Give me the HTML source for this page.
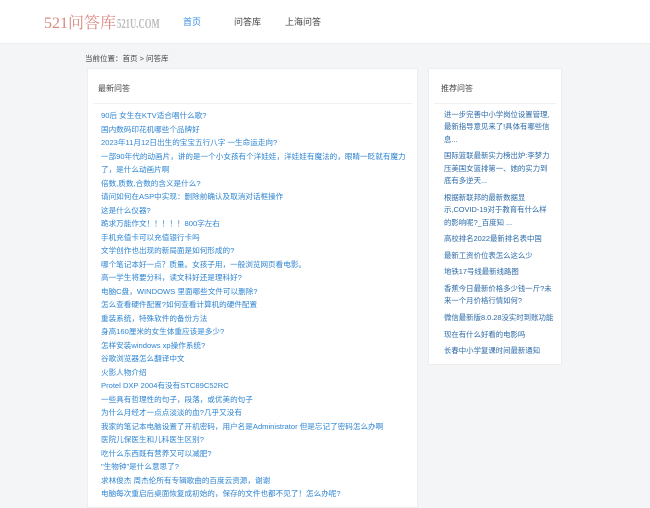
<!DOCTYPE html>
<html><head><meta charset="utf-8"><style>
*{margin:0;padding:0;box-sizing:border-box}
body{width:650px;height:500px;overflow:hidden;background:#f4f5f7;font-family:"Liberation Sans","Noto Sans CJK SC",sans-serif;font-size:8px;color:#333}
.hd{position:absolute;left:0;top:0;width:650px;height:44px;background:#fff;border-bottom:1px solid #eee}
.logo{position:absolute;left:44px;top:10px;font-family:"Liberation Serif","Noto Serif CJK SC",serif;font-size:16px;color:#d98a80;white-space:nowrap}
.logo span{display:inline-block;color:#bbb;font-size:14px;font-weight:bold;transform:scaleX(0.62);transform-origin:left center;margin-left:1px}
.nav{position:absolute;top:15px;font-size:9px;color:#444}
.bc{position:absolute;left:85px;top:53px;font-size:7.5px;color:#444}
.card{position:absolute;background:#fff;border:1px solid #eee}
.ct{position:absolute;left:10px;top:14px;font-size:8px;color:#444}
.ln{position:absolute;left:5px;right:5px;top:34px;border-top:1px solid #f0f0f0}
.l{position:absolute;left:13px;top:40px;width:310px}
.l div{color:#2d84d2;line-height:13.5px;font-size:7.6px;white-space:nowrap}
.l div.w{white-space:normal}
.r{position:absolute;left:15px;top:40px;width:110px}
.r div{color:#2b6aa8;line-height:12.4px;font-size:7.4px;margin-bottom:4.2px}
</style></head><body>
<div class="hd">
<div class="logo">521问答库<span>521U.COM</span></div>
<div class="nav" style="left:183px;color:#3a8ee6">首页</div>
<div class="nav" style="left:234px">问答库</div>
<div class="nav" style="left:285px">上海问答</div>
</div>
<div class="bc">当前位置：首页 &gt; 问答库</div>
<div class="card" style="left:87px;top:68px;width:331px;height:440px">
<div class="ct">最新问答</div><div class="ln"></div>
<div class="l">
<div>90后 女生在KTV适合唱什么歌?</div>
<div>国内数码印花机哪些个品牌好</div>
<div>2023年11月12日出生的宝宝五行八字 一生命运走向?</div>
<div class="w">一部90年代的动画片，讲的是一个小女孩有个洋娃娃，洋娃娃有魔法的，眼睛一眨就有魔力了，是什么动画片啊</div>
<div>倍数,质数,合数的含义是什么?</div>
<div>请问如何在ASP中实现：删除前确认及取消对话框操作</div>
<div>这是什么仪器?</div>
<div>跪求万能作文！！！！！800字左右</div>
<div>手机充值卡可以充值银行卡吗</div>
<div>文学创作也出现的新局面是如何形成的?</div>
<div>哪个笔记本好一点？质量。女孩子用，一般浏览网页看电影。</div>
<div>高一学生将要分科，读文科好还是理科好?</div>
<div>电脑C盘，WINDOWS 里面哪些文件可以删除?</div>
<div>怎么查看硬件配置?如何查看计算机的硬件配置</div>
<div>重装系统，特殊软件的备份方法</div>
<div>身高160厘米的女生体重应该是多少?</div>
<div>怎样安装windows xp操作系统?</div>
<div>谷歌浏览器怎么翻译中文</div>
<div>火影人物介绍</div>
<div>Protel DXP 2004有没有STC89C52RC</div>
<div>一些具有哲理性的句子，段落，或优美的句子</div>
<div>为什么月经才一点点淡淡的血?几乎又没有</div>
<div>我家的笔记本电脑设置了开机密码，用户名是Administrator 但是忘记了密码怎么办啊</div>
<div>医院儿保医生和儿科医生区别?</div>
<div>吃什么东西既有营养又可以减肥?</div>
<div>"生物钟"是什么意思了?</div>
<div>求林俊杰 周杰伦所有专辑歌曲的百度云资源，谢谢</div>
<div>电脑每次重启后桌面恢复成初始的，保存的文件也都不见了！怎么办呢?</div>
</div></div>
<div class="card" style="left:428px;top:68px;width:134px;height:297px">
<div class="ct" style="left:12px">推荐问答</div><div class="ln"></div>
<div class="r">
<div>进一步完善中小学岗位设置管理,最新指导意见来了!具体有哪些信息...</div>
<div>国际篮联最新实力榜出炉:李梦力压美国女篮排第一、她的实力到底有多逆天...</div>
<div>根据新联邦的最新数据显示,COVID-19对于教育有什么样的影响呢?_百度知 ...</div>
<div>高校排名2022最新排名表中国</div>
<div>最新工资价位表怎么这么少</div>
<div>地铁17号线最新线路图</div>
<div>香蕉今日最新价格多少钱一斤?未来一个月价格行情如何?</div>
<div>微信最新版8.0.28没实时到账功能</div>
<div>现在有什么好看的电影吗</div>
<div>长春中小学复课时间最新通知</div>
</div></div>
</body></html>
